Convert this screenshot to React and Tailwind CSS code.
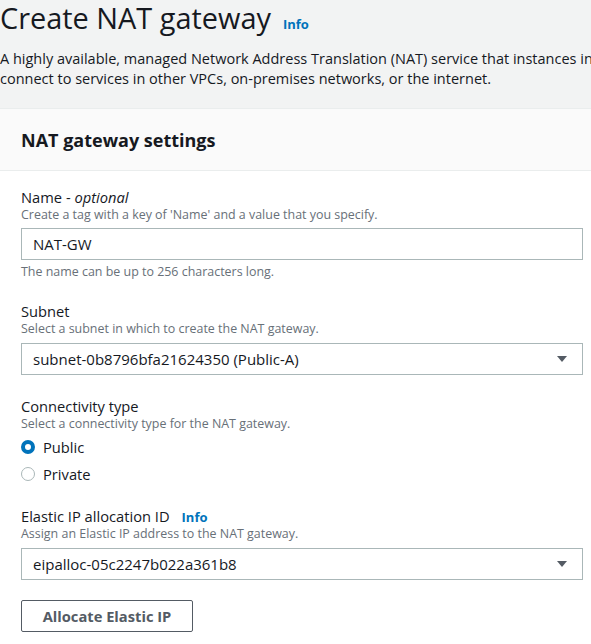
import React from "react";

function Caret() {
  return (
    <svg width="12" height="8" viewBox="0 0 12 8" className="shrink-0">
      <path d="M1 1 H11 L6 7 Z" fill="#545b64" />
    </svg>
  );
}

function Label({ children }) {
  return <div className="text-[14.7px] leading-[20px] text-[#16191f]">{children}</div>;
}

function Desc({ children }) {
  return <div className="text-[12.45px] leading-[16px] text-[#687078]">{children}</div>;
}

function Select({ value }) {
  return (
    <div className="mt-[6px] flex h-[32px] w-[562px] items-center justify-between border border-[#aab7b8] bg-white pl-[11px] pr-[14px]">
      <span className="text-[15px] leading-[20px] text-[#16191f]">{value}</span>
      <Caret />
    </div>
  );
}

function Radio({ checked, label }) {
  return (
    <div className="flex h-[27px] items-center gap-[8px]">
      {checked ? (
        <span className="box-border block h-[14px] w-[14px] rounded-full border-[4px] border-[#0073bb] bg-white" />
      ) : (
        <span className="box-border block h-[14px] w-[14px] rounded-full border border-[#aab7b8] bg-white" />
      )}
      <span className="text-[14.7px] leading-[20px] text-[#16191f]">{label}</span>
    </div>
  );
}

export default function App() {
  return (
    <div className="min-h-screen w-full overflow-hidden bg-[#f2f3f3] font-['Open_Sans',sans-serif] text-[#16191f]">
      <div className="flex items-baseline gap-[12px]">
        <h1 className="text-[28.9px] leading-[36px] font-normal whitespace-nowrap">Create NAT gateway</h1>
        <span className="text-[13px] leading-[16px] font-bold text-[#0073bb]">Info</span>
      </div>
      <div className="mt-[13px] text-[14.5px] leading-[20px] whitespace-nowrap text-[#16191f]">
        <div>A highly available, managed Network Address Translation (NAT) service that instances in</div>
        <div>connect to services in other VPCs, on-premises networks, or the internet.</div>
      </div>

      <div className="mt-[19px] w-[604px] border-t border-[#eaeded] bg-white">
        <div className="flex h-[62px] items-center border-b border-[#eaeded] bg-[#fafafa] px-[21px]">
          <h2 className="text-[18px] leading-[22px] font-bold whitespace-nowrap">NAT gateway settings</h2>
        </div>
        <div className="px-[21px] pt-[16px] pb-[40px]">
          <Label>
            Name - <span className="italic">optional</span>
          </Label>
          <Desc>Create a tag with a key of 'Name' and a value that you specify.</Desc>
          <div className="mt-[5px] flex h-[32px] w-[562px] items-center border border-[#aab7b8] bg-white pl-[11px]">
            <span className="text-[15px] leading-[20px]">NAT-GW</span>
          </div>
          <div className="mt-[4px]">
            <Desc>The name can be up to 256 characters long.</Desc>
          </div>

          <div className="mt-[21px]">
            <Label>Subnet</Label>
            <Desc>Select a subnet in which to create the NAT gateway.</Desc>
            <Select value="subnet-0b8796bfa21624350 (Public-A)" />
          </div>

          <div className="mt-[21px]">
            <Label>Connectivity type</Label>
            <Desc>Select a connectivity type for the NAT gateway.</Desc>
            <div className="mt-[1px] flex flex-col">
              <Radio checked label="Public" />
              <Radio label="Private" />
            </div>
          </div>

          <div className="mt-[19px]">
            <div className="flex items-baseline gap-[12px]">
              <Label>Elastic IP allocation ID</Label>
              <span className="text-[13px] leading-[16px] font-bold text-[#0073bb]">Info</span>
            </div>
            <Desc>Assign an Elastic IP address to the NAT gateway.</Desc>
            <Select value="eipalloc-05c2247b022a361b8" />
          </div>

          <button className="mt-[20px] flex h-[32px] w-[172px] items-center justify-center rounded-[2px] border border-[#545b64] bg-white text-[14.7px] leading-[20px] font-bold text-[#545b64]">
            Allocate Elastic IP
          </button>
        </div>
      </div>
    </div>
  );
}
